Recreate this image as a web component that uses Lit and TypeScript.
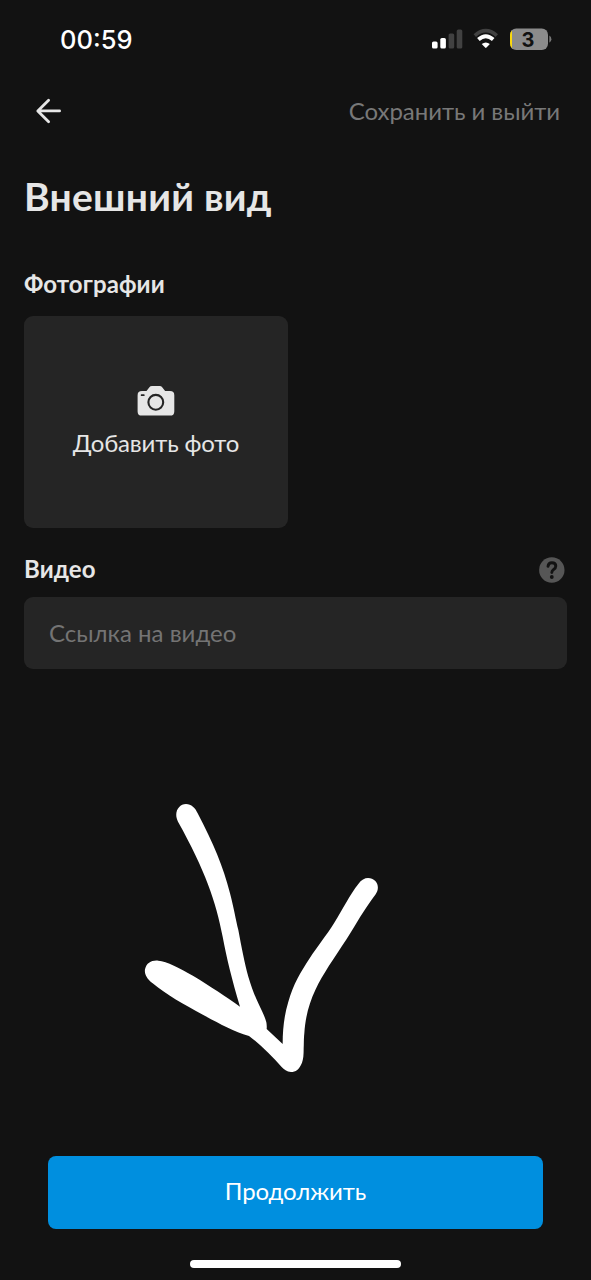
import { LitElement, html, css } from "lit";
import { customElement } from "lit/decorators.js";

@customElement("status-bar")
class StatusBar extends LitElement {
  static styles = css`
    :host { display: flex; justify-content: space-between; align-items: center; height: 78px; padding: 0 38px 0 60px; box-sizing: border-box; }
    .time { padding-top: 2px; font: 500 25.5px/30px Inter, sans-serif; color: #fff; letter-spacing: 0; }
    .icons { display: block; }
    .level { font: 700 20px Inter, sans-serif; fill: #111; }
  `;
  render() {
    return html`
      <span class="time">00:59</span>
      <svg class="icons" width="121" height="24" viewBox="0 0 121 24">
        <rect x="0" y="14.5" width="5.6" height="7" rx="1.6" fill="#fff" />
        <rect x="8.3" y="11" width="5.6" height="10.5" rx="1.6" fill="#fff" />
        <rect x="16.6" y="6.5" width="5.6" height="15" rx="1.6" fill="#414141" />
        <rect x="24.7" y="2.5" width="5.6" height="19" rx="1.6" fill="#414141" />
        <path d="M42.8 8.6Q53.8 -1.2 64.8 8.6" fill="none" stroke="#414141" stroke-width="3.6" />
        <path d="M46.4 12.5Q53.8 5.8 61.2 12.5" fill="none" stroke="#fff" stroke-width="3.8" />
        <path d="M49.7 15.9Q53.8 12.5 57.9 15.9L54.5 19.4Q53.8 20 53.1 19.4Z" transform="translate(0 1.2)" fill="#fff" />
        <rect x="78" y="1.5" width="38" height="21.5" rx="6.2" fill="#8b8b8b" />
        <path d="M80 3.4V21.2Q78 19.4 78 16V8Q78 5 80 3.4Z" fill="#fbd90b" />
        <path d="M117.3 8.6Q119.4 9.6 119.4 12.2Q119.4 14.8 117.3 15.8Z" fill="#777" />
        <text class="level" x="96" y="19.5" text-anchor="middle">3</text>
      </svg>
    `;
  }
}

@customElement("app-root")
class AppRoot extends LitElement {
  static styles = css`
    :host {
      display: flex; flex-direction: column; position: relative; box-sizing: border-box;
      width: 591px; height: 1280px; overflow: hidden; background: #121212; color: #e6e6e6;
      font: 400 24px/30px Lato, Carlito, sans-serif;
    }
    .nav { display: flex; justify-content: space-between; align-items: center; height: 66px; padding: 0 31px 0 35px; }
    .back { display: block; }
    .save { color: #787878; letter-spacing: -0.06px; }
    main { display: flex; flex-direction: column; flex: 1; padding: 0 24px; }
    h1 { margin: 28px 0 0; font-size: 39px; line-height: 48px; font-weight: 700; letter-spacing: 0.25px; }
    h2 { margin: 0; font-size: 24px; line-height: 30px; font-weight: 700; letter-spacing: 0.1px; }
    .photos { margin-top: 49px; }
    .add { display: flex; flex-direction: column; align-items: center; box-sizing: border-box; width: 264px; height: 212px; margin-top: 17px; padding-top: 70px; border-radius: 9px; background: #252525; }
    .add span { margin-top: 12px; letter-spacing: -0.15px; }
    .row { display: flex; justify-content: space-between; align-items: center; margin-top: 27px; padding-right: 2px; }
    .row h2 { padding-bottom: 2px; line-height: 28px; }
    .field { display: flex; align-items: center; box-sizing: border-box; height: 72px; margin-top: 12px; padding: 0 25px; border-radius: 9px; background: #252525; color: #747474; }
    .help { display: block; }
    footer { display: flex; flex-direction: column; align-items: center; padding: 0 48px 12px; }
    .next { display: flex; align-items: center; justify-content: center; align-self: stretch; box-sizing: border-box; height: 73px; padding-bottom: 3px; border-radius: 8px; background: #008fdf; color: #fff; letter-spacing: -0.1px; }
    .home { width: 211px; height: 8px; margin-top: 31px; border-radius: 4px; background: #fff; }
    .mark { position: absolute; left: 130px; top: 790px; pointer-events: none; }
  `;
  render() {
    return html`
      <status-bar></status-bar>
      <div class="nav">
        <svg class="back" width="28" height="28" viewBox="0 0 28 28" fill="none" stroke="#e6e6e6" stroke-width="2.8" stroke-linecap="round" stroke-linejoin="round">
          <path d="M13.6 3.2L2.8 13.9L13.6 24.7M3 13.9H24.6" />
        </svg>
        <span class="save">Сохранить и выйти</span>
      </div>
      <main>
        <h1>Внешний вид</h1>
        <h2 class="photos">Фотографии</h2>
        <div class="add">
          <svg width="38" height="30" viewBox="0 0 38 30">
            <path d="M5 5H9.5L12.2 1.4Q13.3 0 15 0H22.6Q24.3 0 25.4 1.4L28.1 5H33Q37.3 5 37.3 9.2V25.4Q37.3 29.6 33 29.6H4.8Q.6 29.6 .6 25.4V9.2Q.6 5 5 5Z" fill="#e6e6e6" />
            <circle cx="18.8" cy="16.3" r="7.4" fill="none" stroke="#252525" stroke-width="2.1" />
            <rect x="3.8" y="8.2" width="3.8" height="1.9" rx=".6" fill="#252525" />
          </svg>
          <span>Добавить фото</span>
        </div>
        <div class="row">
          <h2>Видео</h2>
          <svg class="help" width="26" height="26" viewBox="0 0 26 26">
            <circle cx="12.8" cy="13" r="12.7" fill="#565656" />
            <path d="M9 9.3Q9.4 5.7 12.9 5.7Q16.8 5.7 16.8 9.1Q16.8 11.1 14.6 12.5Q12.8 13.7 12.8 15.5" fill="none" stroke="#121212" stroke-width="2.9" stroke-linecap="round" />
            <circle cx="12.8" cy="20" r="1.9" fill="#121212" />
          </svg>
        </div>
        <div class="field">Ссылка на видео</div>
      </main>
      <footer>
        <div class="next">Продолжить</div>
        <div class="home"></div>
      </footer>
      <svg class="mark" width="260" height="290" viewBox="0 0 780 870">
        <path fill="#fff" d="M144 95C130 68 146 42 168 42C184 42 196 54 203 70C250 160 280 230 300 310C312 356 317 388 325 420C334 468 344 520 355 560C364 590 373 615 385 640C396 664 405 680 409 697Q411 707 410 717L458 762C458 715 463 675 475 635C490 582 512 546 540 503C560 473 590 435 612 400C640 355 660 313 685 282C700 260 722 260 736 273C746 284 746 300 737 313C700 362 680 400 650 447C610 508 580 550 556 600C538 638 526 680 523 730C521 750 522 760 521 775C521 795 520 808 516 818C508 838 497 846 483 846C470 845 462 839 455 831C425 798 390 762 357 738C310 724 270 702 220 675C160 643 110 615 68 580C48 564 43 550 45 538C50 518 65 510 85 512C110 514 150 535 190 558C240 588 290 622 330 650C305 565 290 505 278 440C258 335 225 240 144 95Z" />
      </svg>
    `;
  }
}
